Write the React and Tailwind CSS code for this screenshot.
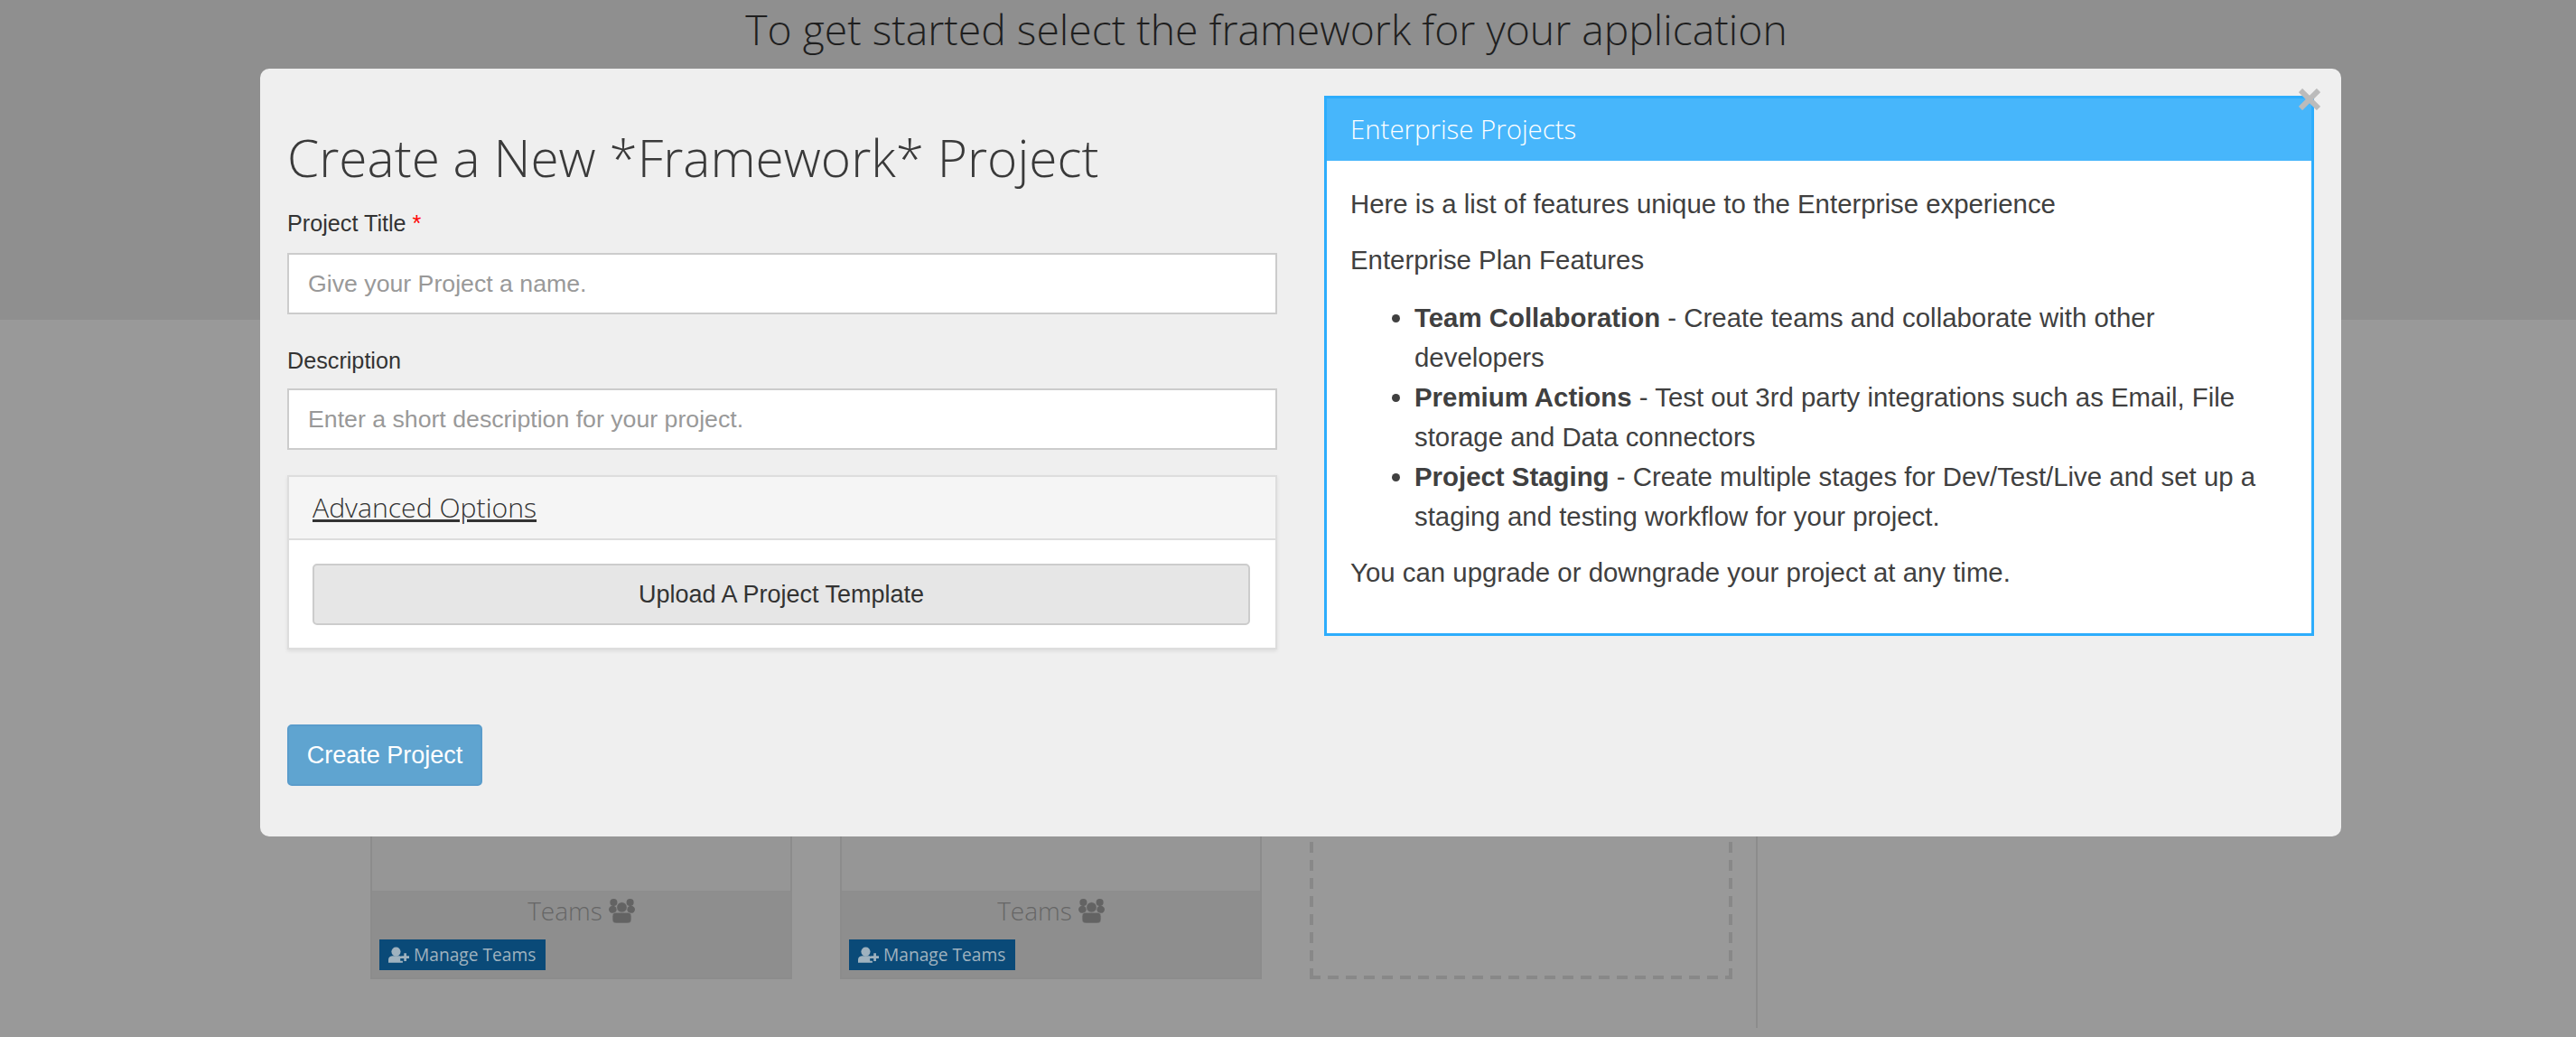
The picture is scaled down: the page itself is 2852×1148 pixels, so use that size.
import React from 'react';

function UsersIcon() {
  return (
    <svg viewBox="816 285 86 80" className="w-[29px] h-[27px] shrink-0" fill="#636363">
      <circle cx="832" cy="297" r="12" />
      <circle cx="886" cy="297" r="12" />
      <ellipse cx="829" cy="320" rx="13" ry="12" />
      <ellipse cx="889" cy="320" rx="13" ry="12" />
      <circle cx="859" cy="313" r="17" fill="#636363" stroke="#8e8e8e" strokeWidth="2" />
      <rect x="828" y="330" width="62" height="35" rx="12" stroke="#8e8e8e" strokeWidth="2" />
    </svg>
  );
}

function UserPlusIcon() {
  return (
    <svg viewBox="90 450 68 52" className="w-[23px] h-[18px] shrink-0" fill="#9fb2bf">
      <circle cx="115" cy="466" r="15" />
      <path d="M90 502V492C90 484 97 480 104 480H126C132 480 136 484 137 488H129V496H137V502Z" />
      <path d="M141 471H149V480H158V488H149V497H141V488H132V480H141Z" />
    </svg>
  );
}

function TeamCard() {
  return (
    <div className="w-[467px] h-[584px] border-2 border-[#8c8c8c] bg-[#969696] flex flex-col justify-end">
      <div className="h-[96px] bg-[#8e8e8e] px-[8px]">
        <div className="h-[44px] flex items-center justify-center gap-[7px] text-[#666666] text-[28px] font-light">
          <span>Teams</span>
          <UsersIcon />
        </div>
        <a className="mt-[10px] w-[184px] h-[34px] bg-[#0a4a78] text-[#9fb2bf] text-[19.2px] whitespace-nowrap flex items-center gap-[5px] pl-[10px]">
          <UserPlusIcon />
          <span>Manage Teams</span>
        </a>
      </div>
    </div>
  );
}

function DashedCard() {
  return (
    <div className="relative w-[468px] h-[584px]">
      <svg className="absolute inset-0 w-full h-full" fill="none">
        <path d="M2 584V0" stroke="#888888" strokeWidth="4" strokeDasharray="12 8" />
        <path d="M466 584V0" stroke="#888888" strokeWidth="4" strokeDasharray="12 8" />
        <path d="M0 582H468" stroke="#888888" strokeWidth="4" strokeDasharray="12 8" />
      </svg>
    </div>
  );
}

export default function App() {
  return (
    <div className="relative h-[1148px] overflow-hidden bg-[#999999] font-['Open_Sans',sans-serif]">
      {/* Page behind the modal, already dimmed */}
      <div className="h-[354px] bg-[#8f8f8f] text-center pr-[48px] pt-[2px]">
        <h2 className="text-[46.3px] leading-[62px] font-light text-[#1f1f1f]">To get started select the framework for your application</h2>
      </div>
      <div className="ml-[410px] mt-[146px] w-[1536px] h-[638px] border-r-2 border-[#8c8c8c] flex gap-[53px]">
        <TeamCard />
        <TeamCard />
        <DashedCard />
      </div>

      {/* Modal */}
      <div className="absolute left-[288px] top-[76px] w-[2304px] h-[850px] rounded-[10px] bg-[#efefef] p-[30px] flex gap-[52px]">
        <button className="absolute right-[23px] top-[22px] z-10 text-[#bbbbbb]">
          <svg width="24" height="24" viewBox="0 0 24 24" className="block">
            <path d="M2 2L22 22M22 2L2 22" stroke="currentColor" strokeWidth="6" />
          </svg>
        </button>

        <div className="w-[1096px] font-['Liberation_Sans',sans-serif]">
          <h1 className="mt-[28px] font-['Open_Sans',sans-serif] font-light text-[56.8px] leading-[80px] text-[#3a3a3a]">Create a New *Framework* Project</h1>
          <label className="block mt-[17px] text-[25.2px] leading-[32px] text-[#333333]">
            Project Title <span className="text-[#ff0000]">*</span>
          </label>
          <input
            className="block mt-[17px] w-full h-[68px] bg-white border-2 border-[#cccccc] px-[21px] text-[26.7px] placeholder:text-[#999999]"
            placeholder="Give your Project a name."
          />
          <label className="block mt-[35px] text-[25.2px] leading-[32px] text-[#333333]">Description</label>
          <input
            className="block mt-[15px] w-full h-[68px] bg-white border-2 border-[#cccccc] px-[21px] text-[26.7px] placeholder:text-[#999999]"
            placeholder="Enter a short description for your project."
          />

          <div className="mt-[28px] h-[193px] border-2 border-[#dddddd] bg-white shadow-[0_2px_4px_rgba(0,0,0,0.08)]">
            <div className="h-[70px] bg-[#f5f5f5] border-b-2 border-[#dddddd] px-[26px] flex items-center">
              <a className="font-['Open_Sans',sans-serif] font-light text-[30.2px] text-[#333333] underline">Advanced Options</a>
            </div>
            <div className="pl-[26px] pr-[28px] pt-[26px]">
              <button className="w-full h-[68px] bg-[#e6e6e6] border-2 border-[#cccccc] rounded-[5px] text-[27px] text-[#333333]">Upload A Project Template</button>
            </div>
          </div>

          <button className="mt-[83px] w-[216px] h-[68px] bg-[#5fa4d0] border-2 border-[#5a9ccb] rounded-[5px] text-[27px] text-white">Create Project</button>
        </div>

        <div className="w-[1096px] h-[598px] bg-white border-[3px] border-[#2dadfc] self-start">
          <div className="h-[69px] bg-[#47b6fb] flex items-center px-[26px] text-[29.4px] font-light text-white">Enterprise Projects</div>
          <div className="px-[26px] pt-[26px] font-['Liberation_Sans',sans-serif] text-[29.4px] leading-[44px] text-[#404040]">
            <p>Here is a list of features unique to the Enterprise experience</p>
            <p className="mt-[18px]">Enterprise Plan Features</p>
            <ul className="mt-[20px] list-disc pl-[71px]">
              <li><b>Team Collaboration</b> - Create teams and collaborate with other developers</li>
              <li><b>Premium Actions</b> - Test out 3rd party integrations such as Email, File storage and Data connectors</li>
              <li><b>Project Staging</b> - Create multiple stages for Dev/Test/Live and set up a staging and testing workflow for your project.</li>
            </ul>
            <p className="mt-[18px]">You can upgrade or downgrade your project at any time.</p>
          </div>
        </div>
      </div>
    </div>
  );
}
